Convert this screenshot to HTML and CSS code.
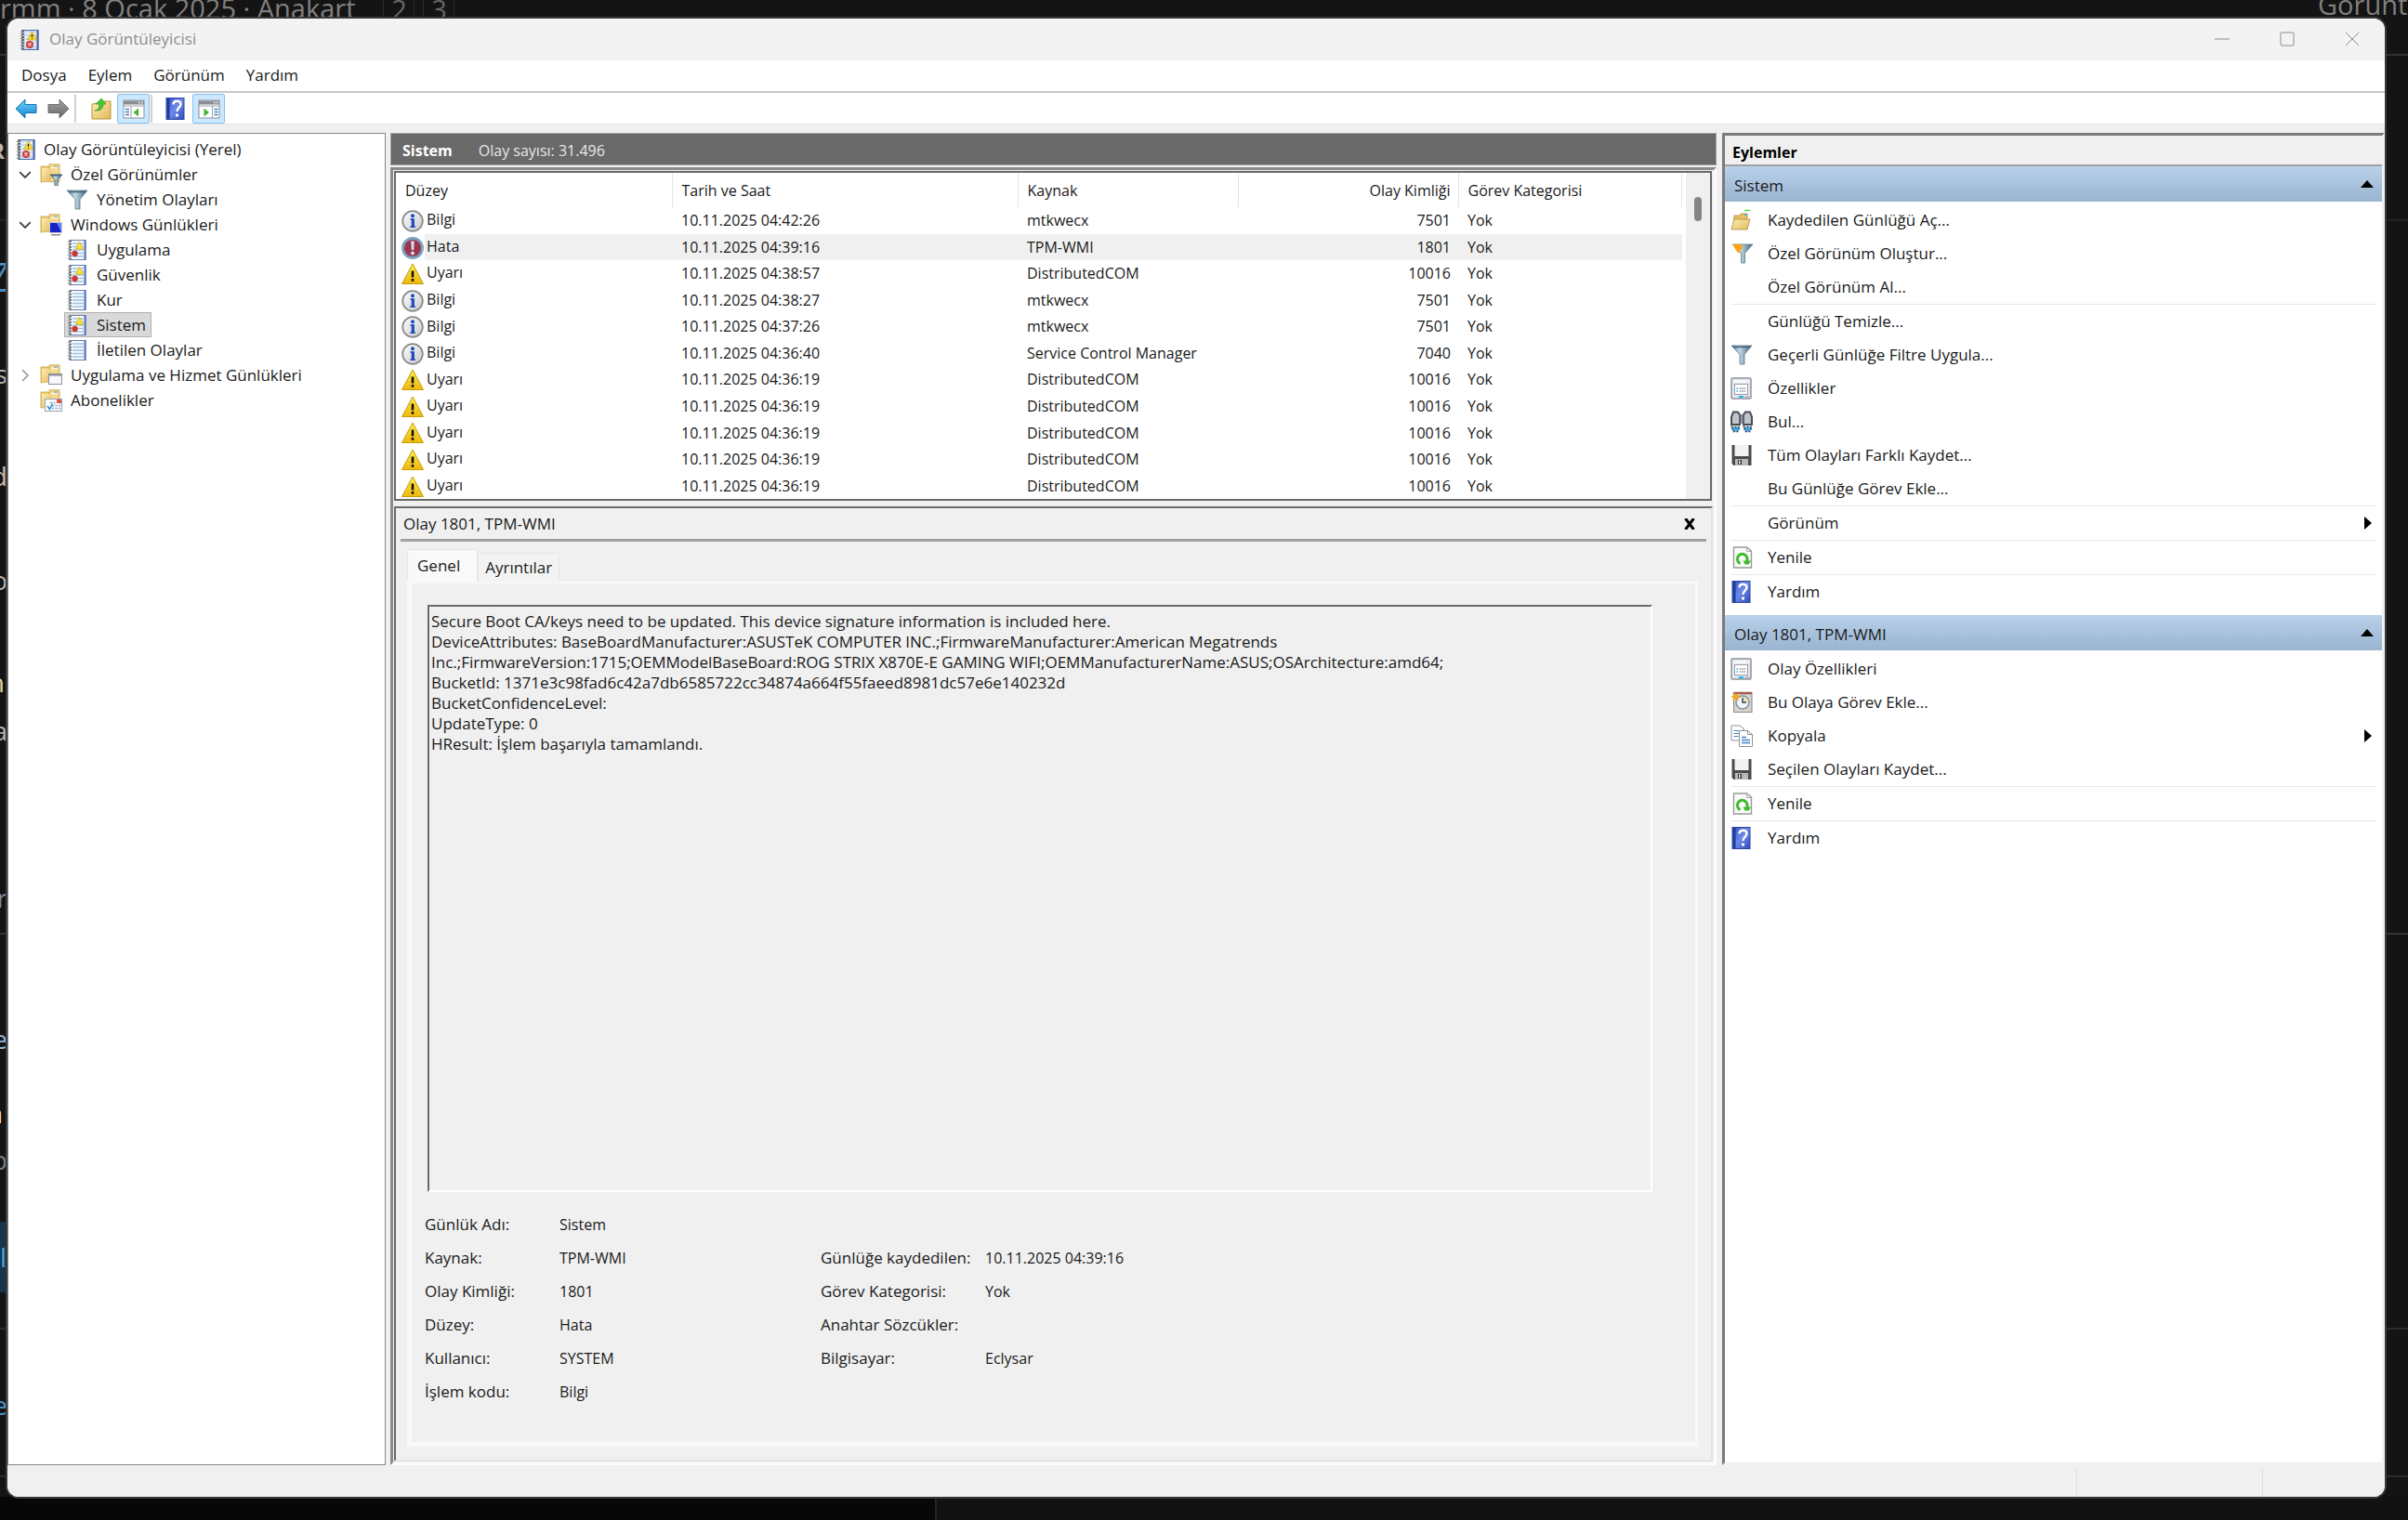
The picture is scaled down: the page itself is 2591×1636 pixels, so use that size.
FILE: index.html
```html
<!DOCTYPE html>
<html lang="tr">
<head>
    <meta charset="UTF-8">
    <meta name="viewport" content="width=device-width, initial-scale=1.0">
    <title>Olay Görüntüleyicisi</title>
    <link rel="stylesheet" href="styles.css">
</head>
<body>
    <!-- Icon set -->
    <svg class="sprite" aria-hidden="true">
        <defs>
            <linearGradient id="gFolder" x1="0" y1="0" x2="1" y2="1"><stop offset="0" stop-color="#fdeeb4"/><stop offset="1" stop-color="#e2b95a"/></linearGradient>
            <linearGradient id="gFunnel" x1="0" y1="0" x2="1" y2="0"><stop offset="0" stop-color="#55798f"/><stop offset=".4" stop-color="#c3d9e6"/><stop offset="1" stop-color="#41647c"/></linearGradient>
            <linearGradient id="gBlue" x1="0" y1="0" x2="0" y2="1"><stop offset="0" stop-color="#6fd0f7"/><stop offset="1" stop-color="#1286d0"/></linearGradient>
            <linearGradient id="gGray" x1="0" y1="0" x2="0" y2="1"><stop offset="0" stop-color="#a6a6a6"/><stop offset="1" stop-color="#666"/></linearGradient>
            <linearGradient id="gHelp" x1="0" y1="0" x2="1" y2="1"><stop offset="0" stop-color="#3552c4"/><stop offset=".5" stop-color="#6d8ae8"/><stop offset="1" stop-color="#2c49b8"/></linearGradient>
            <linearGradient id="gWarn" x1="0" y1="0" x2="0" y2="1"><stop offset="0" stop-color="#fff04a"/><stop offset="1" stop-color="#eeb70d"/></linearGradient>
            <linearGradient id="gInfo" x1="0" y1="0" x2="1" y2="1"><stop offset="0" stop-color="#fff"/><stop offset="1" stop-color="#c9c9c9"/></linearGradient>
        </defs>
        <symbol id="i-log" viewBox="0 0 24 24">
            <rect x="4" y="1.500" width="17" height="21" fill="#f5faff" stroke="#6a7fb0"/>
            <path d="M20.500 1v22" stroke="#5b74b5" stroke-width="2"/>
            <path d="M7 5h12M7 8.500h12M7 12h12M7 15.500h12M7 19h12" stroke="#9cc3dc" stroke-width="1.300"/>
            <path d="M4.500 1.500v21" stroke="#777" stroke-width="3" stroke-dasharray="2 1.200"/>
            <path d="M1.500 3.500h3M1.500 7h3M1.500 10.500h3M1.500 14h3M1.500 17.500h3M1.500 21h3" stroke="#aaa"/>
        </symbol>
        <symbol id="i-eventlog" viewBox="0 0 24 24">
            <use href="#i-log"/>
            <path d="M14.500 3.500l4 7.500h-8z" fill="#ffe23a" stroke="#d9b400" stroke-width=".8"/>
            <circle cx="9.500" cy="16" r="3.200" fill="#cf3636"/>
        </symbol>
        <symbol id="i-app" viewBox="0 0 24 24">
            <rect x="4" y="1.500" width="17" height="21" fill="#c7dbf3" stroke="#4f6ba8"/>
            <path d="M20.500 1v22" stroke="#4c67ac" stroke-width="2"/>
            <path d="M7 5h12M7 9h12M7 13h12M7 17h12" stroke="#f4f9ff" stroke-width="1.500"/>
            <path d="M4.500 1.500v21" stroke="#666" stroke-width="3" stroke-dasharray="2 1.200"/>
            <path d="M1.500 3.500h3M1.500 7h3M1.500 10.500h3M1.500 14h3M1.500 17.500h3M1.500 21h3" stroke="#999"/>
            <path d="M14.500 3l5 9h-10z" fill="#ffe23a" stroke="#c7a300" stroke-width=".8"/>
            <path d="M14.500 6v3M14.500 10v1" stroke="#222" stroke-width="1.300"/>
            <circle cx="12" cy="17" r="4" fill="#d33b3b"/>
            <path d="M10.500 15.500l3 3M13.500 15.500l-3 3" stroke="#fff" stroke-width="1.300"/>
        </symbol>
        <symbol id="i-tab-folder" viewBox="0 0 24 24">
            <path d="M1 3h8l2 2v14l-10 1z" fill="#efcd77" stroke="#c69d3f" stroke-width=".8"/>
            <path d="M10 .8h11v19H10z" fill="#f3d88f" stroke="#c69d3f" stroke-width=".8"/>
            <path d="M2 5h10v14.500H2z" fill="url(#gFolder)"/>
            <path d="M12 4.500h7" stroke="#fff8dc" stroke-width="1.500"/>
            <path d="M15 3h4" stroke="#58a6df" stroke-width="1.200"/>
        </symbol>
        <symbol id="i-funnel" viewBox="0 0 24 24">
            <path d="M1 2h22l-8 9.500V22H10V11.500z" fill="url(#gFunnel)" stroke="#5c7789" stroke-width=".8"/>
            <path d="M3 3.500h18" stroke="#456579" stroke-width="1.500"/>
        </symbol>
        <symbol id="i-custom" viewBox="0 0 24 24">
            <use href="#i-tab-folder"/>
            <path d="M11 12h13l-5 5.500V24h-3v-6.500z" fill="url(#gFunnel)" stroke="#456579"/>
            <path d="M12 12.800h11" stroke="#456579" stroke-width="1.500"/>
        </symbol>
        <symbol id="i-winlogs" viewBox="0 0 24 24">
            <use href="#i-tab-folder"/>
            <rect x="10.500" y="9.500" width="13" height="11" fill="#1723c9" stroke="#c7cbd8"/>
            <path d="M18 10h5v10z" fill="#5c82ee"/>
            <path d="M12 22.800h10" stroke="#8c8c8c" stroke-width="1.500"/>
        </symbol>
        <symbol id="i-services" viewBox="0 0 24 24">
            <use href="#i-tab-folder"/>
            <rect x="9.500" y="10.500" width="14" height="11" fill="#f7f8fb" stroke="#8d919c"/>
            <path d="M9.500 11.500h14" stroke="#8d919c" stroke-width="2"/>
        </symbol>
        <symbol id="i-subs" viewBox="0 0 24 24">
            <use href="#i-tab-folder"/>
            <rect x="5.500" y="10.500" width="18" height="13" fill="#fbfcff" stroke="#9aa2ad"/>
            <path d="M11 14.500h6M13 17.500h9M13 20.500h9" stroke="#8aa0b8" stroke-width="1.500" stroke-dasharray="2 1.500"/>
            <path d="M18 11h5v4h-5z" fill="#e2504a"/>
            <path d="M8 18l2.500 3.500 3-6" stroke="#1f8fd6" stroke-width="1.500" fill="none"/>
        </symbol>
        <symbol id="i-back" viewBox="0 0 24 24">
            <path d="M1 12L11 2v5.500h12v9H11V22z" fill="url(#gBlue)" stroke="#1173b4"/>
        </symbol>
        <symbol id="i-forward" viewBox="0 0 24 24">
            <path d="M23 12L13 2v5.500H1v9h12V22z" fill="url(#gGray)" stroke="#6d6d6d"/>
        </symbol>
        <symbol id="i-up" viewBox="0 0 24 24">
            <path d="M2 7l8-1 3-2h9v19H2z" fill="url(#gFolder)" stroke="#b98f36"/>
            <path d="M5 14q5 0 5-7H6l6-6 5 6h-3q0 8-9 7z" fill="#46c832" stroke="#2d9a1e" stroke-width=".7"/>
        </symbol>
        <symbol id="i-pane-left" viewBox="0 0 24 24">
            <rect x="1" y="3" width="22" height="19" fill="#fff" stroke="#8a8f96"/>
            <path d="M1 5.500h22" stroke="#8a8f96" stroke-width="4"/><path d="M17 5.500h1.500M20 5.500h1.500" stroke="#fff" stroke-width="1.500"/>
            <path d="M1 9h22M9 9v13" stroke="#9aa0a8"/>
            <path d="M3 12.500h4M3 15.500h4M3 18.500h4" stroke="#3f83bd" stroke-width="1.300"/>
            <path d="M17 11.500v9L11.500 16z" fill="#43b331"/>
        </symbol>
        <symbol id="i-pane-right" viewBox="0 0 24 24">
            <rect x="1" y="3" width="22" height="19" fill="#fff" stroke="#8a8f96"/>
            <path d="M1 5.500h22" stroke="#8a8f96" stroke-width="4"/><path d="M17 5.500h1.500M20 5.500h1.500" stroke="#fff" stroke-width="1.500"/>
            <path d="M1 9h22M15.500 9v13" stroke="#9aa0a8"/>
            <path d="M17.500 12.500h4M17.500 15.500h4M17.500 18.500h4" stroke="#3f83bd" stroke-width="1.300"/>
            <path d="M6.500 11.500v9L12 16z" fill="#43b331"/>
        </symbol>
        <symbol id="i-help" viewBox="0 0 24 24">
            <rect x="2" y=".5" width="19" height="23" fill="url(#gHelp)" stroke="#2d45a0"/>
            <path d="M4 1v22" stroke="#1d3c9e" stroke-width="3"/>
            <path d="M9.500 7.500c0-5 8-5 8-.3 0 3.300-4 3.600-4 7.800" fill="none" stroke="#fff" stroke-width="2.400"/>
            <circle cx="13.500" cy="19" r="1.700" fill="#fff"/>
        </symbol>
        <symbol id="i-info" viewBox="0 0 24 24">
            <circle cx="12" cy="12" r="10.800" fill="url(#gInfo)" stroke="#8b8b8b" stroke-width="1.800"/>
            <circle cx="12" cy="6.200" r="2" fill="#1e49bd"/>
            <path d="M9.500 10h3M9.300 18.300h5.600" stroke="#1e49bd" stroke-width="1.600" fill="none"/><path d="M12.300 9.200v9.500" stroke="#1e49bd" stroke-width="3.200"/>
        </symbol>
        <symbol id="i-error" viewBox="0 0 24 24">
            <circle cx="12" cy="12" r="10.500" fill="#9c3650" stroke="#7ba3bf" stroke-width="2.800"/>
            <path d="M10.200 4.500h3.600l-.6 9.500h-2.400z" fill="#d3e2f0"/><circle cx="12" cy="17.500" r="1.900" fill="#d3e2f0"/>
        </symbol>
        <symbol id="i-warn" viewBox="0 0 24 24">
            <path d="M12 1L23.500 22.500H.5z" fill="url(#gWarn)" stroke="#c79c0c" stroke-linejoin="round"/>
            <path d="M10.700 8.500h2.600v7h-2.600zM10.700 17h2.600v2.800h-2.600z" fill="#111"/>
        </symbol>
        <symbol id="i-open" viewBox="0 0 24 24">
            <path d="M4 7h6l1-2h7v14H3z" fill="#e6c069" stroke="#b08a3c" stroke-width=".8"/>
            <path d="M4 11h17l-3 11H1z" fill="url(#gFolder)" stroke="#b08a3c" stroke-width=".8"/>
            <path d="M15 6h3" stroke="#4a9fe0" stroke-width="1.500"/><path d="M15 1.500h6" stroke="#4fdc4a" stroke-width="1.500"/>
        </symbol>
        <symbol id="i-newfilter" viewBox="0 0 24 24">
            <path d="M2 2h22l-8.500 9.500V22h-4V11.500z" fill="url(#gFunnel)" stroke="#5c7789" stroke-width=".8"/>
            <path d="M2 2h10l1 4-3 3 .5 3L7 10 5 7z" fill="#f9a51a"/>
        </symbol>
        <symbol id="i-props" viewBox="0 0 24 24">
            <rect x="1" y="1" width="21" height="22" rx="1" fill="#e5e8ec" stroke="#8d939b" stroke-width="1.500"/>
            <path d="M4 4.500h13M19 4.500h1.500" stroke="#fff" stroke-width="2"/>
            <rect x="4.500" y="7.500" width="14" height="11" fill="#fff" stroke="#9aa0a8"/>
            <path d="M9.500 12h7M9.500 15h7" stroke="#8a8f99"/><path d="M6.500 12h1.500M6.500 15h1.500" stroke="#2bb0ea" stroke-width="1.300"/>
            <path d="M9 21h5" stroke="#25b7ef" stroke-width="2"/><path d="M15.500 21h5" stroke="#b8bcc2" stroke-width="2"/>
        </symbol>
        <symbol id="i-find" viewBox="0 0 24 24">
            <path d="M3 1.500h5l2 3V15H1V7zM16 1.500h5L23 7v8h-9V4.500z" fill="#bfc3ca" stroke="#474c57" stroke-width="2"/>
            <path d="M9 4h6v10H9z" fill="#5b606b"/><path d="M12 3v11" stroke="#c6c9d0"/>
            <path d="M1 17.500h9l-2 5H3zM14 17.500h9l-2 5h-5z" fill="#3fa7e8" stroke="#47505c" stroke-width="1.500" stroke-dasharray="2 1.500"/>
        </symbol>
        <symbol id="i-save" viewBox="0 0 24 24">
            <path d="M1.500 1h21v22h-19l-2-2z" fill="#4b4b4b"/>
            <path d="M4.500 1h15v12h-15z" fill="#f3f3f3"/><path d="M5 16h14v7H5z" fill="#b9b9b9"/>
            <path d="M8 17h4v5H8z" fill="#303030"/><path d="M9 17.500h1.500v4H9z" fill="#eee"/>
        </symbol>
        <symbol id="i-refresh" viewBox="0 0 24 24">
            <path d="M3.500 1h14l5 4v18h-19z" fill="#fbfbfb" stroke="#9a9a9a" stroke-width="1.400"/><path d="M17.500 1v4.500h5" fill="none" stroke="#aaa"/>
            <path d="M10.500 18.500A5.300 5.300 0 1 1 18 14v4" fill="none" stroke="#3dbb2c" stroke-width="3"/><path d="M13.500 15.500h8.500l-2.500 4h-4z" fill="#3dbb2c"/>
        </symbol>
        <symbol id="i-task" viewBox="0 0 24 24">
            <rect x="3.500" y="1.500" width="19.500" height="21" fill="#d8d4cf" stroke="#8b8680"/><path d="M4 2h19" stroke="#a25b4c" stroke-width="2.500"/>
            <circle cx="13" cy="12" r="7" fill="#eef6fb" stroke="#8296a3" stroke-width="1.600"/>
            <path d="M13 12V6a6 6 0 0 1 5.500 6z" fill="#f5dfa0"/><path d="M13 7v5h4" stroke="#34495a" stroke-width="1.500" fill="none"/>
            <path d="M5 0l1 3.500L9.500 2 8 5l3 1.500-3.500.7L9 11 5.500 8.500 2 10.500 3.200 7 0 6l3.200-1.200L2 2l3 1.500z" fill="#f7a325"/>
        </symbol>
        <symbol id="i-copy" viewBox="0 0 24 24">
            <path d="M1 1h9l4 3v13H1z" fill="#fff" stroke="#8c9299"/><path d="M3.500 6.500h6M3.500 9.500h6M3.500 12.500h5" stroke="#3f83c4"/>
            <path d="M9.500 6.500h9l5 4v13h-14z" fill="#fff" stroke="#8c9299"/><path d="M18.500 6.500v4h5" fill="none" stroke="#8c9299"/><path d="M12 13.500h5M12 16.500h9M12 19.500h9" stroke="#3f83c4" stroke-width="1.300"/>
        </symbol>
    </svg>

    <!-- Page that sits behind the window -->
    <div class="backdrop">
        <div class="thread"><span>rmm · 8 Ocak 2025 · Anakart</span><span class="page-no">2</span><span class="page-no">3</span></div>
        <div class="thread-view">Görünt</div>
        <div class="edge">
            <span class="frag f-r">R</span>
            <span class="frag f-seven">7</span>
            <span class="frag f-s">s</span>
            <span class="frag f-d">d</span>
            <span class="frag f-o">o</span>
            <span class="frag f-y">n</span>
            <span class="frag f-a">a</span>
            <span class="frag f-n">r</span>
            <span class="frag f-e">e</span>
            <span class="frag f-u">a</span>
            <span class="frag f-p">p</span>
            <span class="frag f-btn">l</span>
            <span class="frag f-e2">e</span>
        </div>
        <div class="rules rules-left"></div>
        <div class="rules rules-right"></div>
        <div class="footer-strip"></div>
    </div>

    <main class="window">
        <header class="titlebar">
            <svg class="icon"><use href="#i-app"/></svg>
            <h1>Olay Görüntüleyicisi</h1>
            <div class="caption-buttons">
                <button aria-label="Simge durumuna küçült"><svg viewBox="0 0 16 16"><path d="M0 8h16"/></svg></button>
                <button aria-label="Ekranı kapla"><svg viewBox="0 0 16 16"><rect x="1" y="1" width="14" height="14" rx="1"/></svg></button>
                <button aria-label="Kapat"><svg viewBox="0 0 16 16"><path d="M1 1l14 14M15 1L1 15"/></svg></button>
            </div>
        </header>

        <nav class="menubar">
            <button>Dosya</button>
            <button>Eylem</button>
            <button>Görünüm</button>
            <button>Yardım</button>
        </nav>

        <div class="toolbar">
            <button aria-label="Geri"><svg class="icon"><use href="#i-back"/></svg></button>
            <button aria-label="İleri"><svg class="icon"><use href="#i-forward"/></svg></button>
            <span class="divider"></span>
            <button aria-label="Yukarı"><svg class="icon"><use href="#i-up"/></svg></button>
            <button class="pressed" aria-label="Konsol ağacı"><svg class="icon"><use href="#i-pane-left"/></svg></button>
            <span class="divider"></span>
            <button aria-label="Yardım"><svg class="icon"><use href="#i-help"/></svg></button>
            <button class="pressed" aria-label="Eylem bölmesi"><svg class="icon"><use href="#i-pane-right"/></svg></button>
        </div>

        <div class="workspace">
            <!-- Console tree -->
            <aside class="tree">
                <a class="node root" href="#"><svg class="icon"><use href="#i-app"/></svg>Olay Görüntüleyicisi (Yerel)</a>
                <ul>
                    <li>
                        <svg class="chevron" viewBox="0 0 12 12"><path d="M1 3.500l5 5 5-5"/></svg>
                        <a class="node" href="#"><svg class="icon"><use href="#i-custom"/></svg>Özel Görünümler</a>
                        <ul>
                            <li><a class="node" href="#"><svg class="icon"><use href="#i-funnel"/></svg>Yönetim Olayları</a></li>
                        </ul>
                    </li>
                    <li>
                        <svg class="chevron" viewBox="0 0 12 12"><path d="M1 3.500l5 5 5-5"/></svg>
                        <a class="node" href="#"><svg class="icon"><use href="#i-winlogs"/></svg>Windows Günlükleri</a>
                        <ul>
                            <li><a class="node" href="#"><svg class="icon"><use href="#i-eventlog"/></svg>Uygulama</a></li>
                            <li><a class="node" href="#"><svg class="icon"><use href="#i-eventlog"/></svg>Güvenlik</a></li>
                            <li><a class="node" href="#"><svg class="icon"><use href="#i-log"/></svg>Kur</a></li>
                            <li><a class="node selected" href="#"><svg class="icon"><use href="#i-eventlog"/></svg>Sistem</a></li>
                            <li><a class="node" href="#"><svg class="icon"><use href="#i-log"/></svg>İletilen Olaylar</a></li>
                        </ul>
                    </li>
                    <li>
                        <svg class="chevron closed" viewBox="0 0 12 12"><path d="M3.500 1l5 5-5 5"/></svg>
                        <a class="node" href="#"><svg class="icon"><use href="#i-services"/></svg>Uygulama ve Hizmet Günlükleri</a>
                    </li>
                    <li>
                        <a class="node" href="#"><svg class="icon"><use href="#i-subs"/></svg>Abonelikler</a>
                    </li>
                </ul>
            </aside>

            <!-- Event list and preview -->
            <section class="center">
                <div class="center-title"><strong>Sistem</strong><span>Olay sayısı: 31.496</span></div>
                <div class="results">
                    <div class="list">
                        <table>
                            <colgroup><col class="c-level"><col class="c-date"><col class="c-source"><col class="c-id"><col></colgroup>
                            <thead>
                                <tr><th>Düzey</th><th>Tarih ve Saat</th><th>Kaynak</th><th class="num">Olay Kimliği</th><th>Görev Kategorisi</th></tr>
                            </thead>
                            <tbody>
                                <tr><td><svg class="icon"><use href="#i-info"/></svg>Bilgi</td><td>10.11.2025 04:42:26</td><td>mtkwecx</td><td class="num">7501</td><td>Yok</td></tr>
                                <tr class="selected"><td><svg class="icon"><use href="#i-error"/></svg>Hata</td><td>10.11.2025 04:39:16</td><td>TPM-WMI</td><td class="num">1801</td><td>Yok</td></tr>
                                <tr><td><svg class="icon"><use href="#i-warn"/></svg>Uyarı</td><td>10.11.2025 04:38:57</td><td>DistributedCOM</td><td class="num">10016</td><td>Yok</td></tr>
                                <tr><td><svg class="icon"><use href="#i-info"/></svg>Bilgi</td><td>10.11.2025 04:38:27</td><td>mtkwecx</td><td class="num">7501</td><td>Yok</td></tr>
                                <tr><td><svg class="icon"><use href="#i-info"/></svg>Bilgi</td><td>10.11.2025 04:37:26</td><td>mtkwecx</td><td class="num">7501</td><td>Yok</td></tr>
                                <tr><td><svg class="icon"><use href="#i-info"/></svg>Bilgi</td><td>10.11.2025 04:36:40</td><td>Service Control Manager</td><td class="num">7040</td><td>Yok</td></tr>
                                <tr><td><svg class="icon"><use href="#i-warn"/></svg>Uyarı</td><td>10.11.2025 04:36:19</td><td>DistributedCOM</td><td class="num">10016</td><td>Yok</td></tr>
                                <tr><td><svg class="icon"><use href="#i-warn"/></svg>Uyarı</td><td>10.11.2025 04:36:19</td><td>DistributedCOM</td><td class="num">10016</td><td>Yok</td></tr>
                                <tr><td><svg class="icon"><use href="#i-warn"/></svg>Uyarı</td><td>10.11.2025 04:36:19</td><td>DistributedCOM</td><td class="num">10016</td><td>Yok</td></tr>
                                <tr><td><svg class="icon"><use href="#i-warn"/></svg>Uyarı</td><td>10.11.2025 04:36:19</td><td>DistributedCOM</td><td class="num">10016</td><td>Yok</td></tr>
                                <tr><td><svg class="icon"><use href="#i-warn"/></svg>Uyarı</td><td>10.11.2025 04:36:19</td><td>DistributedCOM</td><td class="num">10016</td><td>Yok</td></tr>
                            </tbody>
                        </table>
                        <div class="scrollbar"><div class="thumb"></div></div>
                    </div>

                    <div class="preview">
                        <div class="preview-title">
                            <h2>Olay 1801, TPM-WMI</h2>
                            <button aria-label="Önizlemeyi kapat"><svg viewBox="0 0 12 12"><path d="M1.500 0l9 12M10.500 0l-9 12"/></svg></button>
                        </div>
                        <div class="tabs">
                            <button class="tab active">Genel</button>
                            <button class="tab">Ayrıntılar</button>
                        </div>
                        <div class="tab-page">
                            <textarea readonly aria-label="Olay açıklaması">Secure Boot CA/keys need to be updated. This device signature information is included here.
DeviceAttributes: BaseBoardManufacturer:ASUSTeK COMPUTER INC.;FirmwareManufacturer:American Megatrends
Inc.;FirmwareVersion:1715;OEMModelBaseBoard:ROG STRIX X870E-E GAMING WIFI;OEMManufacturerName:ASUS;OSArchitecture:amd64;
BucketId: 1371e3c98fad6c42a7db6585722cc34874a664f55faeed8981dc57e6e140232d
BucketConfidenceLevel:
UpdateType: 0
HResult: İşlem başarıyla tamamlandı.</textarea>
                            <dl class="fields">
                                <dt>Günlük Adı:</dt><dd class="wide">Sistem</dd>
                                <dt>Kaynak:</dt><dd>TPM-WMI</dd><dt>Günlüğe kaydedilen:</dt><dd>10.11.2025 04:39:16</dd>
                                <dt>Olay Kimliği:</dt><dd>1801</dd><dt>Görev Kategorisi:</dt><dd>Yok</dd>
                                <dt>Düzey:</dt><dd>Hata</dd><dt>Anahtar Sözcükler:</dt><dd></dd>
                                <dt>Kullanıcı:</dt><dd>SYSTEM</dd><dt>Bilgisayar:</dt><dd>Eclysar</dd>
                                <dt>İşlem kodu:</dt><dd class="wide">Bilgi</dd>
                            </dl>
                        </div>
                    </div>
                </div>
            </section>

            <!-- Actions -->
            <aside class="actions">
                <h2>Eylemler</h2>
                <button class="band">Sistem<svg viewBox="0 0 14 8"><path d="M0 8l7-8 7 8z"/></svg></button>
                <div class="group">
                    <button><svg class="icon"><use href="#i-open"/></svg>Kaydedilen Günlüğü Aç...</button>
                    <button><svg class="icon"><use href="#i-newfilter"/></svg>Özel Görünüm Oluştur...</button>
                    <button><span class="icon"></span>Özel Görünüm Al...</button>
                    <hr>
                    <button><span class="icon"></span>Günlüğü Temizle...</button>
                    <button><svg class="icon"><use href="#i-funnel"/></svg>Geçerli Günlüğe Filtre Uygula...</button>
                    <button><svg class="icon"><use href="#i-props"/></svg>Özellikler</button>
                    <button><svg class="icon"><use href="#i-find"/></svg>Bul...</button>
                    <button><svg class="icon"><use href="#i-save"/></svg>Tüm Olayları Farklı Kaydet...</button>
                    <button><span class="icon"></span>Bu Günlüğe Görev Ekle...</button>
                    <hr>
                    <button><span class="icon"></span>Görünüm<svg class="more" viewBox="0 0 8 14"><path d="M0 0l8 7-8 7z"/></svg></button>
                    <hr>
                    <button><svg class="icon"><use href="#i-refresh"/></svg>Yenile</button>
                    <hr>
                    <button><svg class="icon"><use href="#i-help"/></svg>Yardım</button>
                </div>
                <button class="band">Olay 1801, TPM-WMI<svg viewBox="0 0 14 8"><path d="M0 8l7-8 7 8z"/></svg></button>
                <div class="group">
                    <button><svg class="icon"><use href="#i-props"/></svg>Olay Özellikleri</button>
                    <button><svg class="icon"><use href="#i-task"/></svg>Bu Olaya Görev Ekle...</button>
                    <button><svg class="icon"><use href="#i-copy"/></svg>Kopyala<svg class="more" viewBox="0 0 8 14"><path d="M0 0l8 7-8 7z"/></svg></button>
                    <button><svg class="icon"><use href="#i-save"/></svg>Seçilen Olayları Kaydet...</button>
                    <hr>
                    <button><svg class="icon"><use href="#i-refresh"/></svg>Yenile</button>
                    <hr>
                    <button><svg class="icon"><use href="#i-help"/></svg>Yardım</button>
                </div>
            </aside>
        </div>

        <footer class="statusbar"><span></span><span></span><span></span></footer>
    </main>
</body>
</html>
```
FILE: styles.css
```css
/* General styles */
* {
    box-sizing: border-box;
}

body {
    margin: 0;
    height: 100vh;
    padding: 20px 25px 25px 8px;
    overflow: hidden;
    background: #141414;
    color: #1a1a1a;
    font-family: "Open Sans", "Noto Sans", sans-serif;
    font-size: 17px;
    line-height: 24px;
}

button {
    margin: 0;
    padding: 0;
    border: 0;
    background: none;
    color: inherit;
    font: inherit;
    text-align: left;
}

h1, h2, ul, dl, dd {
    margin: 0;
    padding: 0;
}

h1, h2 {
    font-size: 17px;
    font-weight: 400;
}

ul {
    list-style: none;
}

.sprite {
    position: absolute;
    width: 0;
    height: 0;
}

.icon {
    width: 24px;
    height: 24px;
    flex: none;
}

/* Page behind the window */
.backdrop {
    position: absolute;
    inset: 0;
    overflow: hidden;
    color: #808080;
    font-size: 29px;
    line-height: 36px;
}

.thread {
    position: absolute;
    top: -9px;
    left: 0;
    display: flex;
    white-space: nowrap;
}

.page-no {
    width: 34px;
    margin-left: 9px;
    border: 1px solid #2b2b2b;
    text-align: center;
    color: #666;
}

.page-no:nth-child(2) {
    margin-left: 30px;
}

.thread-view {
    position: absolute;
    top: -13px;
    right: 0;
    width: 97px;
    overflow: hidden;
}

.edge {
    position: absolute;
    inset: 0 auto 0 0;
    width: 8px;
    overflow: hidden;
    color: #b5b5b5;
    font-size: 28px;
}

.frag {
    position: absolute;
    right: 0;
}

.f-r { top: 144px; right: 3px; font-weight: 700; font-size: 24px; }
.f-seven { top: 278px; color: #4a8cc0; font-style: italic; font-size: 36px; text-decoration: underline; }
.f-s { top: 384px; }
.f-d { top: 494px; color: #c9b9a8; }
.f-o { top: 606px; }
.f-y { top: 716px; right: 3px; color: #e0d49a; }
.f-a { top: 768px; }
.f-n { top: 948px; color: #7d8fa8; }
.f-e { top: 1100px; color: #8fb8dc; }
.f-u { top: 1180px; right: 5px; color: #eee; font-weight: 700; }
.f-p { top: 1230px; color: #7d7d7d; }
.f-btn { top: 1315px; width: 8px; height: 76px; background: #15354e; color: #47a3df; line-height: 76px; }
.f-e2 { top: 1494px; color: #4a95c8; }

.rules {
    position: absolute;
    inset: 58px auto 0 0;
    width: 8px;
    background:
        linear-gradient(#333, #333) 0 0 / 100% 2px no-repeat,
        linear-gradient(#222, #222) 0 178px / 100% 2px no-repeat,
        linear-gradient(#333, #333) 0 946px / 100% 2px no-repeat,
        linear-gradient(#2b2b2b, #2b2b2b) 0 1371px / 100% 2px no-repeat,
        linear-gradient(#2b2b2b, #2b2b2b) 0 1530px / 100% 2px no-repeat;
}

.rules-right {
    left: auto;
    right: 0;
    width: 25px;
}

.footer-strip {
    position: absolute;
    left: 0;
    right: 0;
    bottom: 0;
    height: 25px;
    background: linear-gradient(90deg, #070707 0 1006px, #252525 1006px 1008px, #121212 1008px);
}

/* Window */
.window {
    position: relative;
    display: flex;
    flex-direction: column;
    height: 100%;
    overflow: hidden;
    border-radius: 12px;
    background: #f0f0f0;
    box-shadow: 0 0 0 2px #3a3a3a;
}

.titlebar {
    display: flex;
    align-items: center;
    height: 45px;
    padding-left: 12px;
    background: #f3f3f3;
    color: #8e8e8e;
}

.titlebar h1 {
    flex: 1;
    margin-left: 9px;
    padding-bottom: 2px;
}

.caption-buttons {
    display: flex;
}

.caption-buttons button {
    width: 70px;
    height: 45px;
    padding-bottom: 2px;
    display: grid;
    place-items: center;
}

.caption-buttons svg {
    width: 16px;
    height: 16px;
    fill: none;
    stroke: #8c8c8c;
}

.menubar {
    display: flex;
    gap: 23px;
    height: 35px;
    padding: 4px 15px 5px;
    border-bottom: 2px solid #c4c6c8;
    background: #fff;
}

.toolbar {
    display: flex;
    align-items: center;
    height: 34px;
    padding-left: 2px;
    border-bottom: 1px solid #e3e3e3;
    background: #fff;
}

.toolbar button {
    display: grid;
    place-items: center;
    width: 35px;
    height: 32px;
}

.toolbar .pressed {
    border: 1px solid #84bfee;
    border-radius: 2px;
    background: #cce8ff;
}

.toolbar .divider {
    width: 2px;
    height: 30px;
    background: #d0d0d0;
}

.toolbar .divider:nth-of-type(1) {
    margin: 0 9px 0 0;
}

.toolbar .divider:nth-of-type(2) {
    margin: 0 7px 0 1px;
}

.toolbar button:last-child {
    margin-left: 1px;
}

.workspace {
    display: flex;
    flex: 1;
    min-height: 0;
    padding-top: 9px;
}

/* Console tree */
.tree {
    width: 407px;
    padding: 3px 0 0 8px;
    border: 1px solid #828790;
    background: #fff;
}

.node {
    display: flex;
    align-items: center;
    width: fit-content;
    height: 27px;
    padding: 0 5px 0 1px;
    gap: 9px;
    border: 1px solid transparent;
    color: inherit;
    text-decoration: none;
    white-space: nowrap;
}

.node.root {
    padding-left: 0;
    gap: 7px;
    margin-left: -2px;
}

.tree li {
    display: grid;
    grid-template-columns: 24px 1fr;
    align-items: center;
    justify-items: start;
}

.tree li > .node {
    grid-column: 2;
}

.tree li > ul {
    grid-column: 1 / -1;
    padding-left: 28px;
}

.tree .selected {
    border-color: #b0b0b0;
    background: #d9d9d9;
}

.chevron {
    grid-column: 1;
    grid-row: 1;
    width: 14px;
    height: 14px;
    margin-left: 3px;
    fill: none;
    stroke: #404040;
    stroke-width: 1.5;
}

.chevron.closed {
    stroke: #a0a0a0;
}

/* Event list */
.center {
    display: flex;
    flex-direction: column;
    flex: 1;
    min-width: 0;
    margin: 0 6px 0 5px;
}

.center-title {
    display: flex;
    align-items: center;
    gap: 28px;
    height: 35px;
    padding: 2px 0 0 12px;
    border: 1px solid #a0a0a0;
    background: #696969;
    color: #fff;
    font-size: 16px;
}

.center-title span {
    color: #e8e8e8;
}

.results {
    display: flex;
    flex-direction: column;
    flex: 1;
    min-height: 0;
    margin-top: 2px;
    padding: 1px;
    border: 3px solid;
    border-color: #8a8a8a #fbfbfb #fbfbfb #8a8a8a;
}

.list {
    display: flex;
    margin-right: 1px;
    border: 2px solid #696969;
    background: #fff;
}

table {
    flex: 1;
    height: 351px;
    border-collapse: collapse;
    table-layout: fixed;
    font-size: 16px;
}

.c-level { width: 297px; }
.c-date { width: 372px; }
.c-source { width: 237px; }
.c-id { width: 237px; }

th, td {
    padding: 0 8px 0 10px;
    font-weight: 400;
    text-align: left;
    white-space: nowrap;
}

th {
    height: 37px;
    border-right: 1px solid #e5e5e5;
}

td .icon {
    margin-right: 3px;
    margin-left: -4px;
    vertical-align: middle;
}

.num {
    text-align: right;
}

tr.selected td {
    background: #f0f0f0;
}

tr.selected td:first-child {
    background: linear-gradient(90deg, #fff 31px, #f0f0f0 31px);
}

.scrollbar {
    width: 26px;
    margin-left: 4px;
    padding: 26px 9px;
    background: #f0f0f0;
}

.thumb {
    width: 8px;
    height: 26px;
    border-radius: 4px;
    background: #858585;
}

/* Preview */
.preview {
    display: flex;
    flex-direction: column;
    flex: 1;
    min-height: 0;
    margin-top: 6px;
    padding: 0 5px;
    border: 2px solid;
    border-color: #696969 #e3e3e3 #e3e3e3 #696969;
}

.preview-title {
    display: flex;
    align-items: center;
    justify-content: space-between;
    height: 36px;
    padding: 0 12px 0 3px;
    border-bottom: 3px solid #a0a0a0;
}

.preview-title svg {
    display: block;
    width: 12px;
    height: 12px;
    stroke: #000;
    stroke-width: 3;
}

.tabs {
    display: flex;
    align-items: flex-end;
    height: 43px;
    padding-left: 7px;
}

.tab {
    height: 31px;
    padding: 0 7px;
    border: 1px solid #e6e6e6;
    border-bottom: 0;
    background: #f3f3f3;
}

.tab.active {
    height: 35px;
    padding: 0 18px 0 10px;
    background: #f9f9f9;
}

.tab-page {
    display: flex;
    flex-direction: column;
    flex: 1;
    min-height: 0;
    margin: 0 9px 14px 7px;
    padding: 23px 46px 0 17px;
    border: solid #f9f9f9;
    border-width: 2px 3px 5px 5px;
}

textarea {
    flex: 1;
    min-height: 0;
    padding: 5px 2px;
    border: 2px solid;
    border-color: #696969 #fff #fff #696969;
    background: #f0f0f0;
    color: inherit;
    font: inherit;
    font-size: 17px;
    line-height: 22px;
    resize: none;
    outline: none;
}

.fields {
    display: grid;
    grid-template-columns: 145px 281px 177px 1fr;
    grid-auto-rows: 36px;
    height: 269px;
    margin-left: -3px;
    padding-top: 17px;
    line-height: 36px;
}

.fields dd {
    font-size: 16px;
}

.fields .wide {
    grid-column: 2 / -1;
}

/* Actions */
.actions {
    width: 713px;
    border: 3px solid;
    border-color: #7a7a7a #f0f0f0 #f0f0f0 #7a7a7a;
    background: #fff;
}

.actions h2 {
    height: 33px;
    padding-left: 8px;
    border-bottom: 2px solid #a0a0a0;
    background: #f0f0f0;
    color: #000;
    font-size: 16px;
    font-weight: 700;
    line-height: 36px;
}

.band {
    display: flex;
    align-items: center;
    justify-content: space-between;
    width: 100%;
    height: 38px;
    padding: 3px 9px 0 10px;
    background: linear-gradient(#b9d1ea, #99b4d1);
}

.band svg {
    width: 14px;
    height: 8px;
    margin-bottom: 3px;
}

.group {
    padding: 2px 6px 7px;
}

.group button {
    display: flex;
    align-items: center;
    width: 100%;
    height: 36px;
}

.group button .icon {
    margin-right: 16px;
}

.group .more {
    width: 8px;
    height: 14px;
    margin: 0 5px 0 auto;
}

hr {
    height: 1px;
    margin: 0;
    border: 0;
    background: #e8e8e8;
}

/* Status bar */
.statusbar {
    display: flex;
    height: 34px;
    padding-top: 4px;
    background: #f0f0f0;
}

.statusbar span {
    width: 200px;
    border-right: 1px solid #dcdcdc;
}

.statusbar span:first-child {
    flex: 1;
}

.statusbar span:last-child {
    width: 131px;
    border: 0;
}
```
